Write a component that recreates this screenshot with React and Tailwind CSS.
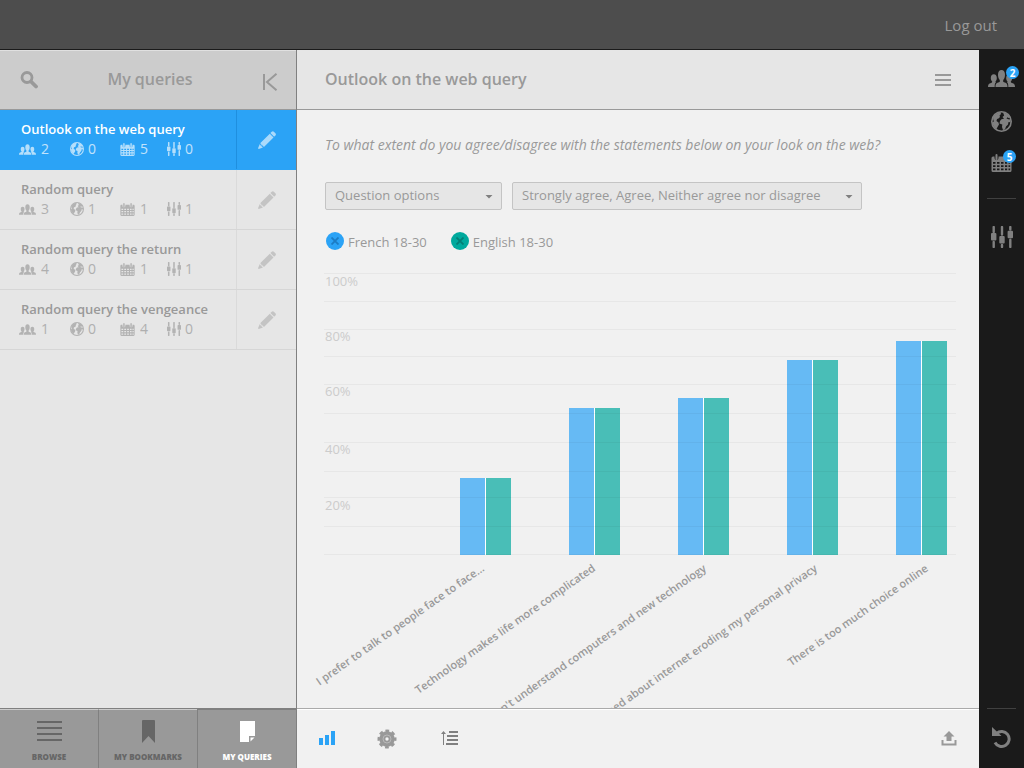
const queries = [
  { title: 'Outlook on the web query', people: 2, regions: 0, dates: 5, filters: 0, active: true },
  { title: 'Random query', people: 3, regions: 1, dates: 1, filters: 1 },
  { title: 'Random query the return', people: 4, regions: 0, dates: 1, filters: 1 },
  { title: 'Random query the vengeance', people: 1, regions: 0, dates: 4, filters: 0 },
]

const gridLines = [13, 41, 69, 96, 124, 153, 182, 211, 237, 266, 294]

const scale = [
  { label: '100%', y: 26 },
  { label: '80%', y: 81 },
  { label: '60%', y: 136 },
  { label: '40%', y: 194 },
  { label: '20%', y: 250 },
]

const bars = [
  { label: 'I prefer to talk to people face to face…', height: 77 },
  { label: 'Technology makes life more complicated', height: 147 },
  { label: "I don't understand computers and new technology", height: 157 },
  { label: "I'm concerned about internet eroding my personal privacy", height: 195 },
  { label: 'There is too much choice online', height: 214 },
]

function PeopleIcon({ className }) {
  return (
    <svg viewBox="0 0 27 17" className={className} fill="currentColor" aria-hidden="true">
      <path d="M7.500 17c0-3.500 1-3.900 3.500-4.700l.8-.5V10C10.600 8.900 10 7 10 4.800 10 1.700 11.300 0 13.500 0S17 1.700 17 4.800c0 2.200-.6 4.100-1.800 5.200v1.800l.8.500c2.500.8 3.500 1.200 3.500 4.700z" />
      <path d="M0 17c0-2.800.8-3.300 3-4.100.8-.3 1.200-.6 1.200-1.500C3.100 10.500 2.800 9.300 2.800 8c0-2.300 1.100-3.700 3-3.700S8.800 5.700 8.800 8c0 1.500-.4 2.600-1.300 3.400 0 .4.200.7.500.9C6.900 13.300 6.700 14.500 6.700 17z" />
      <path d="M27 17c0-2.800-.8-3.300-3-4.100-.8-.3-1.200-.6-1.200-1.500 1.100-.9 1.400-2.100 1.400-3.400 0-2.300-1.100-3.700-3-3.700S18.200 5.700 18.200 8c0 1.500.4 2.600 1.300 3.400 0 .4-.2.700-.5.900 1.100 1 1.300 2.200 1.300 4.700z" />
    </svg>
  )
}

function GlobeIcon({ className }) {
  return (
    <svg viewBox="0 0 21 21" className={className} aria-hidden="true">
      <circle cx="10.500" cy="10.500" r="9.700" fill="none" stroke="currentColor" strokeWidth="1.600" />
      <path
        fill="currentColor"
        d="M2 6.500C3.500 3.500 6.500 1.500 9.500 1.200L10 3 8.500 4.500 9 6 7.500 7.500 6 8l-.5 2L7.500 11.500 8 13.500 6.500 16 5.500 18C3 16.500 1.500 14 1.300 11L3 10.500 2.300 9z"
      />
      <path
        fill="currentColor"
        d="M12 1.500c3 .3 6 2.200 7.300 5L17.500 7l-1-.8-1 1.300 1.800.8 2.200.2v2.700l-2-.2-.5 2.500-2 2-1 3-2 .5-1-3 .3-2.500-2.800-1L9 10l1.500-1.800 2.500-.5L11.500 6l1.700-1.500z"
      />
    </svg>
  )
}

function CalendarIcon({ className }) {
  return (
    <svg viewBox="0 0 21 18" className={className} aria-hidden="true">
      <path d="M5.500 1v4M15.500 1v4" stroke="currentColor" strokeWidth="2" strokeLinecap="round" />
      <path
        fill="currentColor"
        fillRule="evenodd"
        d="M2 2.500h1.500V4a2 2 0 0 0 4 0V2.500h6V4a2 2 0 0 0 4 0V2.500H19a1.500 1.500 0 0 1 1.500 1.500V16.500a1.500 1.500 0 0 1-1.500 1.500H2A1.500 1.500 0 0 1 .5 16.500V4A1.500 1.500 0 0 1 2 2.500zM2 8v1.700h2.500V8zM6 8v1.700h2.500V8zM10 8v1.700h2.500V8zM14 8v1.700h2.200V8zM17.500 8v1.700h1.700V8zM2 11.200v1.800h2.500v-1.800zM6 11.200v1.800h2.500v-1.800zM10 11.200v1.800h2.500v-1.800zM14 11.200v1.800h2.200v-1.800zM17.500 11.200v1.800h1.700v-1.800zM2 14.600v1.600h2.500v-1.600zM6 14.600v1.600h2.500v-1.600zM10 14.600v1.600h2.500v-1.600zM14 14.600v1.600h2.200v-1.600zM17.500 14.600v1.600h1.700v-1.600z"
      />
    </svg>
  )
}

function SlidersIcon({ className }) {
  return (
    <svg viewBox="0 0 22 22" className={className} aria-hidden="true">
      <path
        d="M2.700 1v5M2.700 16V21M11 1v7.500M11 19V21M19.300 1v2.500M19.300 13.700V21"
        stroke="currentColor"
        strokeWidth="2.400"
        strokeLinecap="round"
      />
      <g fill="currentColor">
        <rect x="0" y="7" width="5.400" height="7.500" rx="1" />
        <rect x="8.300" y="10" width="5.400" height="7.500" rx="1" />
        <rect x="16.600" y="4.700" width="5.400" height="7.500" rx="1" />
      </g>
    </svg>
  )
}

function PencilIcon() {
  return (
    <svg viewBox="0 0 18 18" className="size-[18px]" fill="currentColor" aria-hidden="true">
      <path d="M13.700.8a1.600 1.600 0 0 1 2.200 0l1.500 1.500a1.600 1.600 0 0 1 0 2.200l-1.300 1.300-3.700-3.700z" />
      <path d="M11.800 2.700l3.700 3.700-9.300 9.300-1.500-.4-.4-1.400-1.500-.4-.4-1.400z" />
      <path d="M1.800 13l.4 1.300 1.300.3.400 1.400 1.300.4L.7 18 0 17.300z" />
    </svg>
  )
}

function Stat({ icon, value, className }) {
  return (
    <span className={`flex items-center ${className}`}>
      <span className="flex w-[18px] justify-start opacity-65">{icon}</span>
      <span className="opacity-70">{value}</span>
    </span>
  )
}

function QueryRow({ query }) {
  return (
    <li
      className={`flex h-[60px] border-b ${query.active
          ? 'border-[#2ba3f6] bg-[#2ba3f6] text-white'
          : 'border-[#d6d6d6] text-[#999]'
        }`}
    >
      <a href="#query" className="flex-1 pt-[10px] pl-[21px]">
        <span className="block text-[13px] leading-[19px] font-semibold">{query.title}</span>
        <span className="-ml-[2px] flex text-[14px] leading-5">
          <Stat className="w-[51px] gap-1" value={query.people} icon={<PeopleIcon className="h-[11px] w-[17px]" />} />
          <Stat className="w-[50px]" value={query.regions} icon={<GlobeIcon className="size-[14px]" />} />
          <Stat className="w-[47px] gap-[2px]" value={query.dates} icon={<CalendarIcon className="h-[13px] w-[15px]" />} />
          <Stat value={query.filters} icon={<SlidersIcon className="size-[14px]" />} />
        </span>
      </a>
      <button
        type="button"
        aria-label={`Edit ${query.title}`}
        className={`flex w-[60px] items-center justify-center border-l ${query.active
            ? 'border-[#1f8fdf] text-white/60'
            : 'border-[#dadada] text-[#c4c4c4]'
          }`}
      >
        <PencilIcon />
      </button>
    </li>
  )
}

function Tab({ label, active, children }) {
  return (
    <button
      type="button"
      className={`flex flex-1 flex-col items-center border-t border-l pt-[7px] first:border-l-0 ${active
          ? 'border-[#808080] text-white'
          : 'border-t-[#ccc] border-l-[#808080] text-[#666]'
        }`}
    >
      <span className="flex h-7 items-center justify-center">{children}</span>
      <span className="mt-[6px] text-[8px] leading-3 font-extrabold whitespace-nowrap">{label}</span>
    </button>
  )
}

function Sidebar() {
  return (
    <aside className="flex w-[297px] shrink-0 flex-col border-r border-[#808080] bg-[#e6e6e6]">
      <header className="flex h-[60px] items-center justify-between border-t border-b border-t-[#e0e0e0] border-b-[#999] bg-[#ccc] pr-[18px] pl-5 text-[#999]">
        <button type="button" aria-label="Search">
          <svg viewBox="0 0 18 18" className="size-[18px]" fill="none" stroke="currentColor" aria-hidden="true">
            <circle cx="7" cy="6.500" r="5" strokeWidth="2.800" />
            <path d="M11 10.500l5 5" strokeWidth="3.800" strokeLinecap="round" />
          </svg>
        </button>
        <h2 className="pb-[2px] text-[16px] leading-6 font-semibold">My queries</h2>
        <button type="button" aria-label="Collapse panel" className="pt-1">
          <svg viewBox="0 0 16 18" className="h-[18px] w-4" fill="none" stroke="currentColor" strokeWidth="2" aria-hidden="true">
            <path d="M2 1v16M14.500 .8L5 9l9.500 8.200" />
          </svg>
        </button>
      </header>
      <ul className="flex-1">
        {queries.map((query) => (
          <QueryRow key={query.title} query={query} />
        ))}
      </ul>
      <nav className="flex h-[60px] border-t border-[#808080] bg-[#999]">
        <Tab label="BROWSE">
          <svg viewBox="0 0 25 20" className="h-5 w-[25px]" stroke="currentColor" strokeWidth="2" aria-hidden="true">
            <path d="M0 1h25M0 7h25M0 13h25M0 19h25" />
          </svg>
        </Tab>
        <Tab label="MY BOOKMARKS">
          <svg viewBox="0 0 13 23" className="h-[23px] w-[13px]" fill="currentColor" aria-hidden="true">
            <path d="M1 0h11a1 1 0 0 1 1 1v22l-6.500-7L0 23V1a1 1 0 0 1 1-1z" />
          </svg>
        </Tab>
        <Tab label="MY QUERIES" active>
          <svg viewBox="0 0 15 21" className="h-[21px] w-[15px]" fill="currentColor" aria-hidden="true">
            <path d="M0 0h15v15H9v6H0z" />
            <path d="M10.500 16.500h4l-4 4z" />
          </svg>
        </Tab>
      </nav>
    </aside>
  )
}

function Select({ label, value, className }) {
  return (
    <div className={`relative ${className}`}>
      <select
        aria-label={label}
        className="h-7 w-full appearance-none rounded-xs border border-[#c4c4c4] bg-[#e6e6e6] pr-6 pl-[9px] text-[13px] font-medium text-[#999]"
      >
        <option>{value}</option>
      </select>
      <svg viewBox="0 0 8 4" className="pointer-events-none absolute top-[13px] right-[9px] h-[4px] w-[8px]" fill="#808080" aria-hidden="true">
        <path d="M.5 0h7L4 3.500z" />
      </svg>
    </div>
  )
}

function LegendItem({ label, color }) {
  return (
    <span className="flex items-center gap-[4px]">
      <button type="button" aria-label={`Remove ${label}`} className={`flex size-[18px] items-center justify-center rounded-full ${color}`}>
        <svg viewBox="0 0 8 8" className="size-2" stroke="currentColor" strokeWidth="1.800" aria-hidden="true">
          <path d="M.5 .5l7 7M7.500 .5l-7 7" />
        </svg>
      </button>
      <span className="pt-[2px] text-[13px] leading-4 text-[#999]">{label}</span>
    </span>
  )
}

function Chart() {
  return (
    <svg viewBox="0 0 682 448" className="block w-full shrink-0" role="img" aria-label="Agreement by statement">
      {scale.map((s) => (
        <text key={s.label} x="28" y={s.y} fontSize="13" fill="#ccc">{s.label}</text>
      ))}
      {bars.map((bar, i) => (
        <g key={bar.label}>
          <rect x={163 + i * 109} y={295 - bar.height} width="25" height={bar.height} fill="#66baf4" />
          <rect x={188 + i * 109} y={295 - bar.height} width="1" height={bar.height} fill="#fff" />
          <rect x={189 + i * 109} y={295 - bar.height} width="25" height={bar.height} fill="#49beb7" />
          <text
            transform={`translate(${188 + i * 111} 310) rotate(-35)`}
            textAnchor="end"
            fontSize="11"
            fontWeight="600"
            fill="#999"
          >
            {bar.label}
          </text>
        </g>
      ))}
      {gridLines.map((y) => (
        <rect key={y} x="27" y={y} width="632" height="1" fill="#000" opacity="0.040" />
      ))}
    </svg>
  )
}

function Badge({ children }) {
  return (
    <span className="absolute -top-[4px] -right-[4px] flex size-[13px] items-center justify-center rounded-full bg-[#2ba3f6] text-[10px] leading-none font-bold text-white">
      {children}
    </span>
  )
}

export default function App() {
  return (
    <div className="flex h-screen flex-col overflow-hidden bg-[#f1f1f1] font-['Open_Sans',sans-serif]">
      <header className="flex h-[50px] shrink-0 items-center justify-end border-b border-[#1a1a1a] bg-[#4d4d4d] pr-[27px]">
        <a href="#logout" className="pt-[2px] text-[15px] text-[#999]">Log out</a>
      </header>

      <div className="flex min-h-0 flex-1">
        <Sidebar />

        <main className="flex min-w-0 flex-1 flex-col">
          <header className="flex h-[60px] shrink-0 items-center justify-between border-b border-[#999] bg-[#e6e6e6] px-7 text-[#999]">
            <h1 className="pb-[2px] text-[16px] leading-6 font-semibold">Outlook on the web query</h1>
            <button type="button" aria-label="Menu">
              <svg viewBox="0 0 16 12" className="h-3 w-4" stroke="currentColor" strokeWidth="2" aria-hidden="true">
                <path d="M0 1h16M0 6h16M0 11h16" />
              </svg>
            </button>
          </header>

          <section className="flex min-h-0 flex-1 flex-col overflow-hidden">
            <p className="px-7 pt-[23px] text-[14px] leading-6 font-medium text-[#999] italic">
              To what extent do you agree/disagree with the statements below on your look on the web?
            </p>
            <div className="mt-[25px] flex gap-[10px] px-7">
              <Select className="w-[177px]" label="Question options" value="Question options" />
              <Select className="w-[350px]" label="Answers" value="Strongly agree, Agree, Neither agree nor disagree" />
            </div>
            <div className="mt-[22px] mb-[10px] flex gap-6 px-[29px]">
              <LegendItem label="French 18-30" color="bg-[#2ba3f6] text-[#1c7cc4]" />
              <LegendItem label="English 18-30" color="bg-[#00a99d] text-[#047f76]" />
            </div>
            <Chart />
          </section>

          <footer className="flex h-[60px] shrink-0 items-center border-t border-[#aaa] pr-[22px] pb-[2px] pl-[22px] shadow-[inset_0_1px_0_#fff]">
            <button type="button" aria-label="Bar chart" className="text-[#2ba3f6]">
              <svg viewBox="0 0 16 14" className="h-[14px] w-4" fill="currentColor" aria-hidden="true">
                <path d="M0 7h4v7H0zM6 4h4v10H6zM12 0h4v14h-4z" />
              </svg>
            </button>
            <button type="button" aria-label="Settings" className="mt-[2px] ml-[42px] text-[#999]">
              <svg viewBox="0 0 20 20" className="size-5" fill="none" stroke="currentColor" aria-hidden="true">
                <circle cx="10" cy="10" r="4.700" strokeWidth="6" />
                <circle cx="10" cy="10" r="8" strokeWidth="3" strokeDasharray="3.600 2.683" strokeDashoffset="1.800" />
                <circle cx="10" cy="10" r="4" stroke="#b8b8b8" />
              </svg>
            </button>
            <button type="button" aria-label="Sort" className="ml-11 text-[#808080]">
              <svg viewBox="0 0 18 14" className="h-[14px] w-[18px]" fill="currentColor" aria-hidden="true">
                <path d="M2.500 0L5 3H3v11H2V3H0zM8 0h9v2H8zM6 4h11v2H6zM6 8h11v2H6zM5 12h12v2H5z" />
              </svg>
            </button>
            <button type="button" aria-label="Export" className="mt-[2px] ml-auto text-[#999]">
              <svg viewBox="0 0 16 15" className="h-[15px] w-4" fill="currentColor" aria-hidden="true">
                <path d="M8 0l5.500 5.500h-3V10h-5V5.500h-3z" />
                <path d="M1.500 9v4.500h13V9" fill="none" stroke="currentColor" strokeWidth="2" />
              </svg>
            </button>
          </footer>
        </main>

        <aside className="flex w-[45px] shrink-0 flex-col items-center bg-[#1a1a1a] text-[#808080]">
          <button type="button" aria-label="People" className="relative mt-5">
            <PeopleIcon className="h-[17px] w-[27px]" />
            <Badge>2</Badge>
          </button>
          <button type="button" aria-label="Regions" className="mt-6">
            <GlobeIcon className="size-[21px]" />
          </button>
          <button type="button" aria-label="Dates" className="relative mt-[22px]">
            <CalendarIcon className="h-[18px] w-[21px]" />
            <Badge>5</Badge>
          </button>
          <hr className="mt-[26px] w-[29px] border-[#404040]" />
          <button type="button" aria-label="Filters" className="mt-[27px]">
            <SlidersIcon className="size-[22px]" />
          </button>
          <hr className="mt-auto w-[29px] border-[#404040]" />
          <button type="button" aria-label="Undo" className="mt-[18px] mb-[20px]">
            <svg viewBox="0 0 20 21" className="h-[21px] w-5" aria-hidden="true">
              <path d="M4.500 6.500a7.500 7.500 0 1 1-1.500 9" fill="none" stroke="currentColor" strokeWidth="3" />
              <path d="M0 0l9.500 9H0z" fill="currentColor" />
            </svg>
          </button>
        </aside>
      </div>
    </div>
  )
}
